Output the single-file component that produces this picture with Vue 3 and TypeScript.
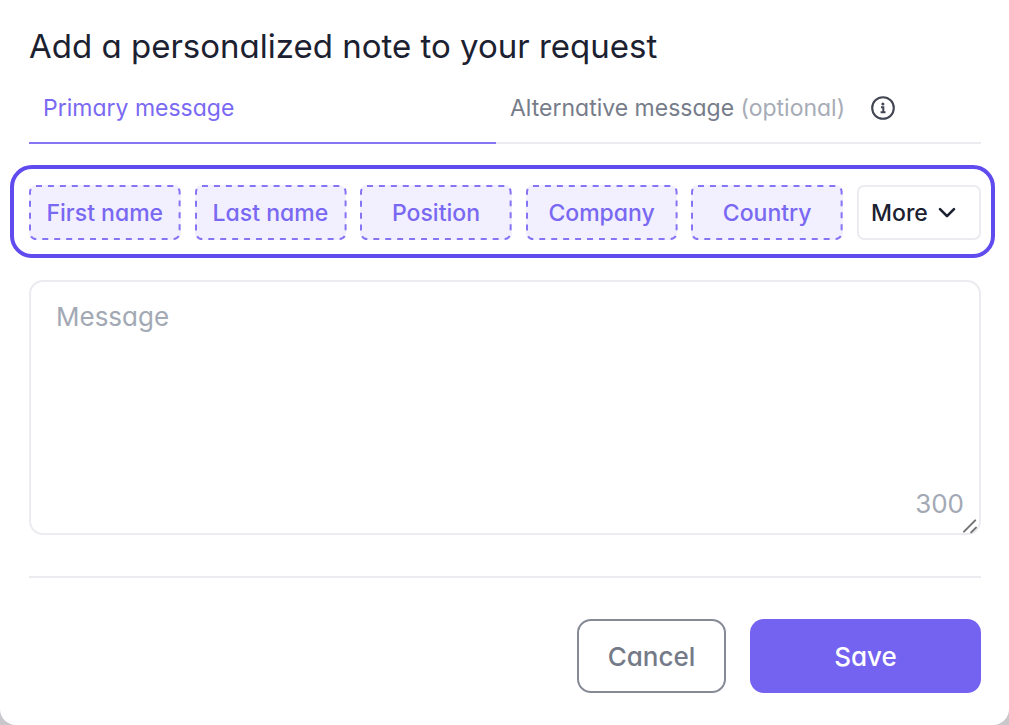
<script setup lang="ts">
import { computed, ref } from 'vue'

type Tab = 'primary' | 'alternative'

const limit = 300
const activeTab = ref<Tab>('primary')
const messages = ref<Record<Tab, string>>({ primary: '', alternative: '' })
const variables: string[] = ['First name', 'Last name', 'Position', 'Company', 'Country']
const extra = ref('')
const remaining = computed(() => limit - messages.value[activeTab.value].length)

function insert(name: string) {
  const next = `${messages.value[activeTab.value]}{${name}}`
  if (next.length <= limit) messages.value[activeTab.value] = next
}

function insertExtra() {
  if (extra.value) insert(extra.value)
  extra.value = ''
}
</script>

<template>
  <main class="dialog" role="dialog" aria-labelledby="note-title">
    <h1 id="note-title" class="title">Add a personalized note to your request</h1>

    <div class="tabs" role="tablist">
      <button
        class="tab"
        :class="{ active: activeTab === 'primary' }"
        type="button"
        role="tab"
        :aria-selected="activeTab === 'primary'"
        @click="activeTab = 'primary'"
      >
        Primary message
      </button>
      <button
        class="tab"
        :class="{ active: activeTab === 'alternative' }"
        type="button"
        role="tab"
        :aria-selected="activeTab === 'alternative'"
        @click="activeTab = 'alternative'"
      >
        <span>Alternative message <span class="optional">(optional)</span></span>
        <svg class="info" viewBox="0 0 24 24" fill="none" aria-hidden="true">
          <circle cx="12" cy="12" r="10.8" stroke="currentColor" stroke-width="2.1" />
          <circle cx="11.9" cy="7.9" r="1.5" fill="currentColor" />
          <path d="M10 11.2h2.3v5M9.6 16.2h4.9" stroke="currentColor" stroke-width="2" />
        </svg>
      </button>
    </div>

    <div class="variables">
      <button v-for="name in variables" :key="name" class="chip" type="button" @click="insert(name)">
        <svg class="outline" aria-hidden="true">
          <rect x="1" y="1" rx="6" pathLength="396" />
        </svg>
        {{ name }}
      </button>
      <div class="more">
        <select v-model="extra" aria-label="More variables" @change="insertExtra">
          <option value="">More</option>
          <option value="Industry">Industry</option>
          <option value="Location">Location</option>
        </select>
        <svg class="chevron" viewBox="0 0 18 12" fill="none" aria-hidden="true">
          <path d="M2 2.2l7 7 7-7" stroke="currentColor" stroke-width="2.6" stroke-linecap="round" stroke-linejoin="round" />
        </svg>
      </div>
    </div>

    <div class="message">
      <textarea v-model="messages[activeTab]" :maxlength="limit" placeholder="Message" aria-label="Message"></textarea>
      <span class="counter">{{ remaining }}</span>
      <svg class="grip" viewBox="0 0 16 16" fill="none" aria-hidden="true">
        <path d="M2 13.6L13.2 2.4M9.2 14.4L14 9.6" stroke="currentColor" stroke-width="2" stroke-linecap="round" />
      </svg>
    </div>

    <footer class="actions">
      <button class="cancel" type="button">Cancel</button>
      <button class="save" type="button">Save</button>
    </footer>
  </main>
</template>

<style>
body {
  background: #c8c8cc;
}
</style>

<style scoped>
* {
  box-sizing: border-box;
}

.dialog {
  min-height: 100vh;
  padding: 24px 28px 32px 29px;
  border-radius: 0 0 16px 16px;
  background: #fff;
  color: #1b2130;
  font-family: Inter, "Open Sans", sans-serif;
  font-feature-settings: "cv11";
}

button,
select,
textarea {
  margin: 0;
  font: inherit;
  font-feature-settings: inherit;
}

button,
select {
  cursor: pointer;
}

.title {
  margin: 0;
  font-size: 33px;
  font-weight: 400;
  line-height: 44px;
}

.tabs {
  display: grid;
  grid-template-columns: 467fr 485fr;
  margin-top: 4px;
}

.tab {
  display: flex;
  align-items: center;
  gap: 26px;
  height: 72px;
  padding: 2px 14px 0;
  border: 0;
  border-bottom: 2px solid #ebebf0;
  background: none;
  color: #767c8a;
  font-size: 23px;
  text-align: left;
  white-space: nowrap;
}

.tab.active {
  border-color: #8676f5;
  color: #7a69f2;
}

.optional {
  color: #a7acb7;
}

.info {
  flex: none;
  width: 24px;
  height: 24px;
  color: #414652;
}

.variables {
  display: grid;
  grid-template-columns: repeat(5, 1fr) 124px;
  gap: 14px;
  margin: 21px -14px 0 -19px;
  padding: 16px 10px 14px 15px;
  border: 4px solid #5f4bee;
  border-radius: 22px;
}

.chip {
  position: relative;
  height: 55px;
  padding: 0;
  border: 0;
  border-radius: 7px;
  background: #f2effe;
  color: #7968f2;
  font-size: 23px;
  font-weight: 500;
  white-space: nowrap;
}

.outline {
  position: absolute;
  inset: 0;
  width: 100%;
  height: 100%;
  overflow: visible;
}

.outline rect {
  width: calc(100% - 2px);
  height: calc(100% - 2px);
  fill: none;
  stroke: #8575f5;
  stroke-width: 2px;
  stroke-dasharray: 6 6;
}

.more {
  position: relative;
}

.more select {
  width: 100%;
  height: 55px;
  padding: 0 36px 0 12px;
  border: 2px solid #ebebf0;
  border-radius: 7px;
  appearance: none;
  background: #fff;
  color: #1b2130;
  font-size: 23px;
  font-weight: 500;
}

.chevron {
  position: absolute;
  top: 22px;
  right: 25px;
  width: 18px;
  height: 12px;
  pointer-events: none;
}

.message {
  position: relative;
  margin-top: 22px;
}

textarea {
  display: block;
  width: 100%;
  height: 255px;
  padding: 17px 25px;
  border: 2px solid #ebebf0;
  border-radius: 14px;
  background: #fff;
  color: #1b2130;
  font-size: 26px;
  line-height: 36px;
  resize: none;
}

textarea::placeholder {
  color: #a3a9b4;
  opacity: 1;
}

.counter {
  position: absolute;
  right: 17px;
  bottom: 13px;
  color: #a3a9b4;
  font-size: 26px;
  line-height: 36px;
}

.grip {
  position: absolute;
  right: 3px;
  bottom: 1px;
  width: 16px;
  height: 16px;
  color: #737373;
}

.actions {
  display: flex;
  justify-content: flex-end;
  gap: 24px;
  margin-top: 41px;
  padding-top: 41px;
  border-top: 2px solid #ebebf0;
}

.cancel,
.save {
  height: 74px;
  border-radius: 14px;
  font-size: 26px;
  font-weight: 500;
}

.cancel {
  width: 149px;
  border: 2px solid #858a96;
  background: #fff;
  color: #747a87;
}

.save {
  width: 231px;
  border: 0;
  background: #7462f0;
  color: #fff;
}
</style>
